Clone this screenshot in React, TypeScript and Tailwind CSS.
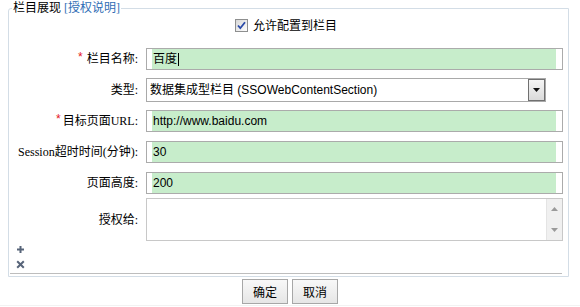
import React from "react";

function Label({ req, space, children }: { req?: boolean; space?: boolean; children: React.ReactNode }) {
  return (
    <div className="w-[129px] shrink-0 text-right leading-[14px] text-[12px] text-black font-['Liberation_Serif','Noto_Sans_CJK_SC',serif]">
      {req && (
        <span className={`text-[#e5151b] font-['Liberation_Sans',sans-serif] relative top-[-2px] ${space ? "mr-[4px]" : "mr-[2px]"}`}>*</span>
      )}
      {children}
    </div>
  );
}

function TextInput({ value, cursor }: { value: string; cursor?: boolean }) {
  return (
    <div className="w-[417px] h-[22px] border border-[#ababab] bg-white pl-[5px] pr-[6px] shrink-0">
      <div className="h-full bg-[#c7edcb] flex items-center pl-[1px] text-[12px] text-black font-['Liberation_Sans','Noto_Sans_CJK_SC',sans-serif]">
        <span className="leading-[14px]">{value}</span>
        {cursor && <span className="inline-block w-px h-[13px] bg-black ml-[1px]" />}
      </div>
    </div>
  );
}

export default function App() {
  return (
    <div className="w-[580px] h-[307px] bg-white overflow-hidden text-[12px]">
      <fieldset className="ml-[8px] w-[561px] h-[277px] border border-[#d3dde6] rounded-tl-[3px] flex flex-col">
        <legend className="ml-[3px] px-[1px] leading-[16px] text-[12px] font-['Liberation_Serif','Noto_Sans_CJK_SC',serif]">
          <span className="text-black">栏目展现</span>
          <span className="ml-[3px] text-[#2f6db5]">[授权说明]</span>
        </legend>

        {/* checkbox row */}
        <div className="h-[18px] flex items-center pl-[226px]">
          <svg width="13" height="13" viewBox="0 0 13 13" className="shrink-0">
            <defs>
              <linearGradient id="cbg" x1="0" y1="0" x2="1" y2="1">
                <stop offset="0" stopColor="#d6d6d6" />
                <stop offset="1" stopColor="#ffffff" />
              </linearGradient>
            </defs>
            <rect x="0.5" y="0.5" width="12" height="12" fill="url(#cbg)" stroke="#8e8f8f" />
            <path d="M3 6.5 L5.3 9.2 L10 3.2" fill="none" stroke="#2a4aa8" strokeWidth="1.8" />
          </svg>
          <span className="ml-[5px] leading-[14px] text-black font-['Noto_Sans_CJK_SC',sans-serif]">允许配置到栏目</span>
        </div>

        {/* row 1 */}
        <div className="mt-[14px] h-[22px] flex items-center gap-[8px]">
          <Label req space>栏目名称:</Label>
          <TextInput value="百度" cursor />
        </div>

        {/* row 2 select */}
        <div className="mt-[8px] h-[24px] flex items-center gap-[8px]">
          <Label>类型:</Label>
          <div className="w-[400px] h-[24px] border border-[#a9a9a9] bg-white flex items-center shrink-0">
            <span className="pl-[3px] flex-1 leading-[14px] text-black font-['Liberation_Sans','Noto_Sans_CJK_SC',sans-serif]">
              数据集成型栏目 (SSOWebContentSection)
            </span>
            <div className="w-[17px] h-[22px] border border-[#707070] bg-gradient-to-b from-[#f5f5f5] to-[#dadada] flex items-center justify-center">
              <svg width="7" height="4" viewBox="0 0 7 4">
                <path d="M0 0 H7 L3.5 4 Z" fill="#111" />
              </svg>
            </div>
          </div>
        </div>

        {/* row 3 */}
        <div className="mt-[8px] h-[22px] flex items-center gap-[8px]">
          <Label req>目标页面URL:</Label>
          <TextInput value="http://www.baidu.com" />
        </div>

        {/* row 4 */}
        <div className="mt-[9px] h-[22px] flex items-center gap-[8px]">
          <Label>Session超时时间(分钟):</Label>
          <TextInput value="30" />
        </div>

        {/* row 5 */}
        <div className="mt-[9px] h-[22px] flex items-center gap-[8px]">
          <Label>页面高度:</Label>
          <TextInput value="200" />
        </div>

        {/* row 6 textarea */}
        <div className="mt-[4px] h-[43px] flex items-center gap-[8px]">
          <Label>授权给:</Label>
          <div className="w-[417px] h-[43px] border border-[#c8c8c8] bg-white flex justify-end shrink-0">
            <div className="w-[16px] h-full bg-[#f0f0f0] border-l border-[#e4e4e4] flex flex-col items-center justify-between py-[8px]">
              <svg width="7" height="4" viewBox="0 0 7 4">
                <path d="M0 4 H7 L3.5 0 Z" fill="#9a9a9a" />
              </svg>
              <svg width="7" height="4" viewBox="0 0 7 4">
                <path d="M0 0 H7 L3.5 4 Z" fill="#9a9a9a" />
              </svg>
            </div>
          </div>
        </div>

        {/* icons */}
        <div className="mt-[4px] h-[9px] pl-[7px] flex">
          <svg width="9" height="9" viewBox="0 0 9 9">
            <path d="M4.5 1 V8 M1 4.5 H8" stroke="#576479" strokeWidth="2" />
          </svg>
        </div>
        <div className="mt-[6px] h-[9px] pl-[7px] flex">
          <svg width="9" height="9" viewBox="0 0 9 9">
            <path d="M1.2 1.2 L7.8 7.8 M7.8 1.2 L1.2 7.8" stroke="#576479" strokeWidth="2" />
          </svg>
        </div>

        <div className="mt-[4px] ml-[1px] mr-[6px] h-px bg-[#bdbdbd]" />
      </fieldset>

      {/* buttons */}
      <div className="mt-[2px] h-[25px] flex justify-center gap-[4px]">
        <button className="w-[46px] h-[25px] border border-[#a7a7a7] bg-gradient-to-b from-[#f8f8f8] to-[#e6e6e6] text-[12px] text-black font-['Noto_Sans_CJK_SC',sans-serif] leading-[14px]">
          确定
        </button>
        <button className="w-[46px] h-[25px] border border-[#a7a7a7] bg-gradient-to-b from-[#f8f8f8] to-[#e6e6e6] text-[12px] text-black font-['Noto_Sans_CJK_SC',sans-serif] leading-[14px]">
          取消
        </button>
      </div>
      <div className="mt-[1px] h-px bg-[#f2f2f2]" />
    </div>
  );
}
